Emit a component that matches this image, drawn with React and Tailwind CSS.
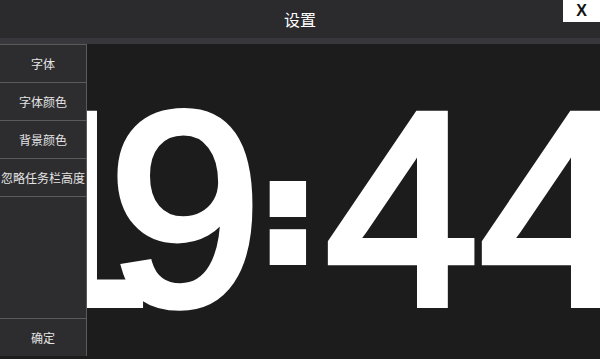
import React from "react";

const cjk = { fontFamily: '"Noto Sans CJK SC", "Noto Sans", sans-serif' };
const lib = { fontFamily: '"Liberation Sans", Arial, sans-serif' };

function SideButton({ label }) {
  return (
    <div className="h-[38px] flex items-center justify-center border-b border-[#5a5a5c] text-[12px] text-[#e4e4e4]" style={cjk}>
      {label}
    </div>
  );
}

export default function App() {
  return (
    <div className="w-[600px] h-[359px] relative overflow-hidden bg-[#1c1c1c] flex flex-col">
      <div className="h-[38px] bg-[#2b2b2e] flex items-center justify-center text-[16px] text-white" style={cjk}>
        设置
      </div>
      <div className="absolute top-0 right-0 w-[37px] h-[22px] bg-white flex items-center justify-center text-[16px] font-bold text-[#111]" style={lib}>
        X
      </div>
      <div className="h-[6px] bg-[#38383c]" />
      <div className="relative flex-1 overflow-hidden">
        <div
          className="flex items-start pt-[27px] pl-[28px] text-white leading-none whitespace-nowrap text-[275px] [-webkit-text-stroke:8px_white]"
          style={lib}
        >
          <span className="w-[96px] shrink-0 flex justify-center">1</span>
          <span className="w-[122px] shrink-0 flex justify-center">9</span>
          <span className="w-[84px] shrink-0 flex justify-center mt-[75px] text-[130px] font-bold [-webkit-text-stroke:18px_white]">:</span>
          <span className="w-[144px] shrink-0 flex justify-center">4</span>
          <span className="w-[164px] shrink-0 flex justify-center">4</span>
        </div>
        <div className="absolute left-0 top-0 w-[87px] h-[312px] bg-[#2d2d30] border-t border-r border-[#5a5a5c] flex flex-col">
          <SideButton label="字体" />
          <SideButton label="字体颜色" />
          <SideButton label="背景颜色" />
          <SideButton label="忽略任务栏高度" />
          <div className="flex-1" />
          <div className="h-[38px] flex items-center justify-center border-t border-[#5a5a5c] text-[12px] text-[#e4e4e4]" style={cjk}>
            确定
          </div>
        </div>
      </div>
    </div>
  );
}
